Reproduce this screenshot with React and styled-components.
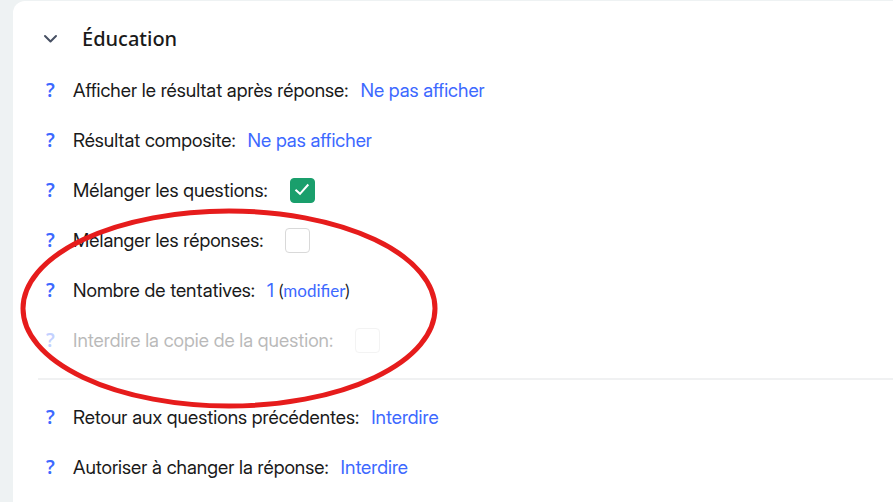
import React, { useState } from 'react';
import styled, { createGlobalStyle } from 'styled-components';

const GlobalStyle = createGlobalStyle`
  * {
    box-sizing: border-box;
  }

  body {
    margin: 0;
    background: #eef2f3;
    color: #1a1a1a;
    font-family: 'Inter Display', Inter, sans-serif;
    font-size: 19px;
  }

  button {
    padding: 0;
    border: 0;
    background: none;
    cursor: pointer;
  }
`;

const Page = styled.main`
  min-height: 100vh;
  padding: 1px 0 0 13px;
  overflow: hidden;
`;

const Panel = styled.section`
  position: relative;
  min-height: 100vh;
  padding: 12px 0 12px 25px;
  border-radius: 12px 0 0 0;
  background: #fff;
`;

const Title = styled.h2`
  margin: 0;
`;

const TitleButton = styled.button`
  display: flex;
  align-items: center;
  height: 50px;
  margin-bottom: 2px;
  color: #1a1a1a;
  font: 500 20px 'Noto Sans', sans-serif;
`;

const Chevron = styled.svg`
  width: 24px;
  height: 24px;
  margin-right: 20px;
  fill: none;
  stroke: #475063;
  stroke-width: 2;
  stroke-linecap: round;
  stroke-linejoin: round;
  transform: ${({ $open }) => ($open ? 'none' : 'rotate(-90deg)')};
`;

const Row = styled.div`
  display: flex;
  align-items: center;
  height: 50px;
  white-space: nowrap;
  opacity: ${({ $disabled }) => ($disabled ? 0.3 : 1)};
`;

const HelpButton = styled.button`
  width: 25px;
  margin-right: 10px;
  color: #3d69ff;
  font: 600 19px 'Noto Sans', sans-serif;
`;

const Label = styled.label`
  margin-right: ${({ $gap }) => $gap || 12}px;
`;

const ValueLink = styled.a`
  color: #3d69ff;
  text-decoration: none;
`;

const Edit = styled.span`
  margin-left: 5px;
  font-family: Lato, sans-serif;
  font-size: 17px;
`;

const CheckBox = styled.input`
  appearance: none;
  width: 25px;
  height: 25px;
  margin: 0;
  border: 1px solid #d9d9d9;
  border-radius: 4px;
  background: #fff;

  &:checked {
    border-color: #1a9f6c;
    background: #1a9f6c;
  }
`;

const CheckHolder = styled.span`
  display: grid;

  > * {
    grid-area: 1 / 1;
  }
`;

const Tick = styled.svg`
  width: 25px;
  height: 25px;
  fill: none;
  stroke: #fff;
  stroke-width: 2;
  pointer-events: none;
`;

const Divider = styled.hr`
  height: 2px;
  margin: 13px 0 12px;
  border: 0;
  background: #f0f1f2;
`;

// hand-drawn style marker lying over the rows
const Marker = styled.svg`
  position: absolute;
  top: 205px;
  left: 6px;
  width: 420px;
  height: 206px;
  fill: none;
  stroke: #e61c1c;
  stroke-width: 5;
  pointer-events: none;
`;

const Help = ({ disabled }) => (
  <HelpButton type='button' aria-label='Aide' disabled={disabled}>
    ?
  </HelpButton>
);

const ChoiceRow = ({ label, value }) => (
  <Row>
    <Help />
    <Label as='span'>{label}</Label>
    <ValueLink href='#'>{value}</ValueLink>
  </Row>
);

const CheckRow = ({ id, label, initial = false, disabled = false }) => {
  const [checked, setChecked] = useState(initial);

  return (
    <Row $disabled={disabled}>
      <Help disabled={disabled} />
      <Label htmlFor={id} $gap={22}>
        {label}
      </Label>
      <CheckHolder>
        <CheckBox
          id={id}
          type='checkbox'
          checked={checked}
          disabled={disabled}
          onChange={(e) => setChecked(e.target.checked)}
        />
        {checked && (
          <Tick viewBox='0 0 25 25'>
            <path d='M5.5 11.7 10 15.8 18.3 6.5' />
          </Tick>
        )}
      </CheckHolder>
    </Row>
  );
};

const App = () => {
  const [open, setOpen] = useState(true);

  return (
    <Page>
      <GlobalStyle />
      <Panel>
        <Title>
          <TitleButton
            type='button'
            aria-expanded={open}
            onClick={() => setOpen(!open)}
          >
            <Chevron viewBox='0 0 24 24' $open={open}>
              <path d='M7 10l5.5 5.5L18 10' />
            </Chevron>
            Éducation
          </TitleButton>
        </Title>
        {open && (
          <>
            <ChoiceRow
              label='Afficher le résultat après réponse:'
              value='Ne pas afficher'
            />
            <ChoiceRow label='Résultat composite:' value='Ne pas afficher' />
            <CheckRow
              id='shuffle-questions'
              label='Mélanger les questions:'
              initial
            />
            <CheckRow id='shuffle-answers' label='Mélanger les réponses:' />
            <Row>
              <Help />
              <Label as='span'>Nombre de tentatives:</Label>
              <ValueLink href='#'>1</ValueLink>
              <Edit>
                (<ValueLink href='#'>modifier</ValueLink>)
              </Edit>
            </Row>
            <CheckRow
              id='forbid-copy'
              label='Interdire la copie de la question:'
              disabled
            />
            <Divider />
            <ChoiceRow
              label='Retour aux questions précédentes:'
              value='Interdire'
            />
            <ChoiceRow
              label='Autoriser à changer la réponse:'
              value='Interdire'
            />
            <Marker viewBox='0 0 420 206'>
              <ellipse cx='210' cy='102.5' rx='206' ry='97.5' />
            </Marker>
          </>
        )}
      </Panel>
    </Page>
  );
};

export default App;
